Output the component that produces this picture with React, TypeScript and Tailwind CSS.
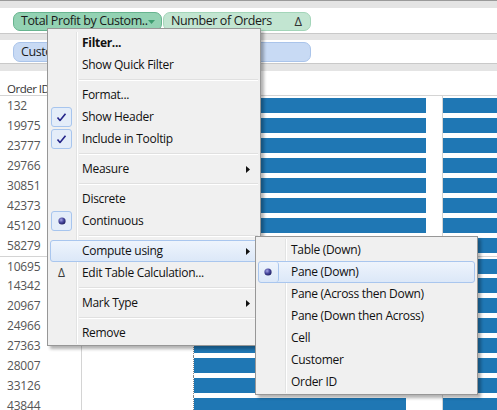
import React from "react";

const upper = ["132", "19975", "23777", "29766", "30851", "42373", "45120", "58279"];
const lower = ["10695", "14342", "20967", "24966", "27363", "28007", "33126", "43844"];

type MenuItem =
  | { sep: true }
  | {
      sep?: false;
      label: string;
      bold?: boolean;
      icon?: "check" | "radio" | "delta";
      arrow?: boolean;
      hl?: boolean;
      iconFrame?: boolean;
    };

const mainItems: MenuItem[] = [
  { label: "Filter...", bold: true },
  { label: "Show Quick Filter" },
  { sep: true },
  { label: "Format..." },
  { label: "Show Header", icon: "check", iconFrame: true },
  { label: "Include in Tooltip", icon: "check", iconFrame: true },
  { sep: true },
  { label: "Measure", arrow: true },
  { sep: true },
  { label: "Discrete" },
  { label: "Continuous", icon: "radio", iconFrame: true },
  { sep: true },
  { label: "Compute using", arrow: true, hl: true },
  { label: "Edit Table Calculation...", icon: "delta" },
  { sep: true },
  { label: "Mark Type", arrow: true },
  { sep: true },
  { label: "Remove" },
];

const subItems: MenuItem[] = [
  { label: "Table (Down)" },
  { label: "Pane (Down)", icon: "radio", hl: true, iconFrame: true },
  { label: "Pane (Across then Down)" },
  { label: "Pane (Down then Across)" },
  { label: "Cell" },
  { label: "Customer" },
  { label: "Order ID" },
];

function Check() {
  return (
    <svg width="11" height="9" viewBox="0 0 11 9">
      <path d="M1.5 4.5 L4 7.5 L9.5 0.8" fill="none" stroke="#25258a" strokeWidth="1.6" strokeLinejoin="round" />
    </svg>
  );
}

function Bullet({ id }: { id: string }) {
  return (
    <svg width="8" height="8" viewBox="0 0 8 8">
      <defs>
        <radialGradient id={id} cx="38%" cy="35%" r="70%">
          <stop offset="0" stopColor="#a7a7e6" />
          <stop offset="0.5" stopColor="#4a4aa0" />
          <stop offset="1" stopColor="#1c1c5c" />
        </radialGradient>
      </defs>
      <circle cx="4" cy="4" r="3.6" fill={`url(#${id})`} />
    </svg>
  );
}

function Arrow() {
  return (
    <svg width="4" height="7" viewBox="0 0 4 7">
      <path d="M0 0 L4 3.5 L0 7 Z" fill="#111" />
    </svg>
  );
}

function Menu({ items, gutter, frameOffset, prefix }: { items: MenuItem[]; gutter: string; frameOffset: string; prefix: string }) {
  return (
    <>
      {items.map((it, i) => {
        if (it.sep) {
          return (
            <div key={i} className="flex h-[8px]">
              <div className={`${gutter} h-full shrink-0 border-r border-[#e2e3e3] shadow-[1px_0_0_#ffffff]`} />
              <div className="ml-[2px] flex flex-1 items-center">
                <div className="h-[2px] w-full border-t border-b border-t-[#e0e0e0] border-b-white" />
              </div>
            </div>
          );
        }
        return (
          <div key={i} className="relative flex h-[22px] items-center">
            {it.hl && (
              <div className="absolute inset-0 rounded-[3px] border border-[#a9c6ee] bg-gradient-to-b from-[#eef4fc] to-[#dce8f8]" />
            )}
            <div
              className={`relative flex h-full shrink-0 items-center ${gutter} ${
                it.hl ? "" : "border-r border-[#e2e3e3] shadow-[1px_0_0_#ffffff]"
              }`}
            >
              {it.icon && (
                <div
                  className={`${frameOffset} flex h-[20px] w-[21px] items-center justify-center rounded-[3px] ${
                    it.iconFrame
                      ? it.hl
                        ? "border-r border-[#a9c6ee]"
                        : "border border-[#a7c5ee] bg-[#e4edf9]"
                      : ""
                  }`}
                >
                  {it.icon === "check" && <Check />}
                  {it.icon === "radio" && <Bullet id={`${prefix}b${i}`} />}
                  {it.icon === "delta" && <span className="text-[12px] leading-none text-[#3a3a3a]">Δ</span>}
                </div>
              )}
            </div>
            <div className="relative flex flex-1 items-center justify-between pl-[5px] pr-[8px]">
              <span className={`whitespace-nowrap text-[12px] leading-none tracking-[-0.3px] text-[#111] ${it.bold ? "font-bold" : ""}`}>
                {it.label}
              </span>
              {it.arrow && <Arrow />}
            </div>
          </div>
        );
      })}
    </>
  );
}

function Row({ id, barW, divider }: { id: string; barW: number; divider?: boolean }) {
  return (
    <div className={`flex h-[20px] ${divider ? "border-t border-[#d4d4d4]" : ""}`}>
      <div className="w-[82px] shrink-0 border-r border-[#d4d4d4] pl-[7px] text-[12px] leading-[19px] tracking-[-0.2px] text-[#555]">{id}</div>
      <div className="w-[361px] shrink-0 border-r border-[#d4d4d4] pl-[111px]">
        <div className="h-full border-l border-dotted border-[#8a8a8a] pt-[2px]">
          <div className="h-[15px] bg-[#1f77b4]" style={{ width: barW }} />
        </div>
      </div>
      <div className="flex-1 pt-[2px]">
        <div className="h-[15px] w-full bg-[#1f77b4]" />
      </div>
    </div>
  );
}

export default function App() {
  return (
    <div className="relative h-[410px] w-[497px] overflow-hidden bg-white font-['Open_Sans',sans-serif]">
      <div className="h-[8px] border-t border-[#9a9a9a] bg-[#e4e4e4]" />
      <div className="flex h-[26px] gap-[1px] border-b border-[#c9c9c9] bg-white pl-[13px] pt-[4px]">
        <div className="flex h-[19px] w-[149px] items-center justify-between rounded-[7px] border border-[#67b48f] bg-[#93d2b3] pl-[7px] pr-[7px]">
          <span className="whitespace-nowrap text-[12.5px] leading-none tracking-[-0.4px] text-[#1a1a1a]">Total Profit by Custom..</span>
          <svg width="7" height="4" viewBox="0 0 7 4" className="shrink-0">
            <path d="M0 0 L7 0 L3.5 4 Z" fill="#3e9d70" />
          </svg>
        </div>
        <div className="flex h-[19px] w-[148px] items-center justify-between rounded-[7px] border border-[#a3d5b9] bg-[#c2e5d1] pl-[7px] pr-[8px]">
          <span className="whitespace-nowrap text-[12.5px] leading-none tracking-[-0.4px] text-[#1a1a1a]">Number of Orders</span>
          <span className="text-[13px] leading-none text-[#333]">Δ</span>
        </div>
      </div>
      <div className="h-[6px] bg-[#e4e4e4]" />
      <div className="h-[24px] border-b border-[#c9c9c9] bg-white pl-[13px] pt-[2px]">
        <div className="flex h-[20px] w-[298px] items-center rounded-[7px] border border-[#aac4ea] bg-[#c8daf4] pl-[7px]">
          <span className="whitespace-nowrap text-[12.5px] leading-none tracking-[-0.4px] text-[#1a1a1a]">Customer</span>
        </div>
      </div>
      <div className="h-[7px] bg-[#e4e4e4]" />
      <div className="flex h-[25px] items-end border-b border-[#d4d4d4] pb-[1px] pl-[7px]">
        <span className="whitespace-nowrap text-[11.5px] leading-none tracking-[-0.5px] text-[#333]">Order ID</span>
      </div>
      {upper.map((id) => (
        <Row key={id} id={id} barW={232} />
      ))}
      {lower.map((id, i) => (
        <Row key={id} id={id} barW={212} divider={i === 0} />
      ))}

      <div className="absolute left-[47px] top-[28px] w-[214px] border border-[#979797] bg-[#f0f0f0] px-[2px] pb-[1px] pt-[3px] shadow-[3px_3px_3px_rgba(0,0,0,0.3)]">
        <Menu items={mainItems} gutter="w-[27px]" frameOffset="ml-[1px]" prefix="m" />
      </div>
      <div className="absolute left-[255px] top-[236px] w-[223px] border border-[#979797] bg-[#f0f0f0] px-[2px] pb-[1px] pt-[2px] shadow-[3px_3px_3px_rgba(0,0,0,0.3)]">
        <Menu items={subItems} gutter="w-[28px]" frameOffset="ml-0" prefix="s" />
      </div>
    </div>
  );
}
